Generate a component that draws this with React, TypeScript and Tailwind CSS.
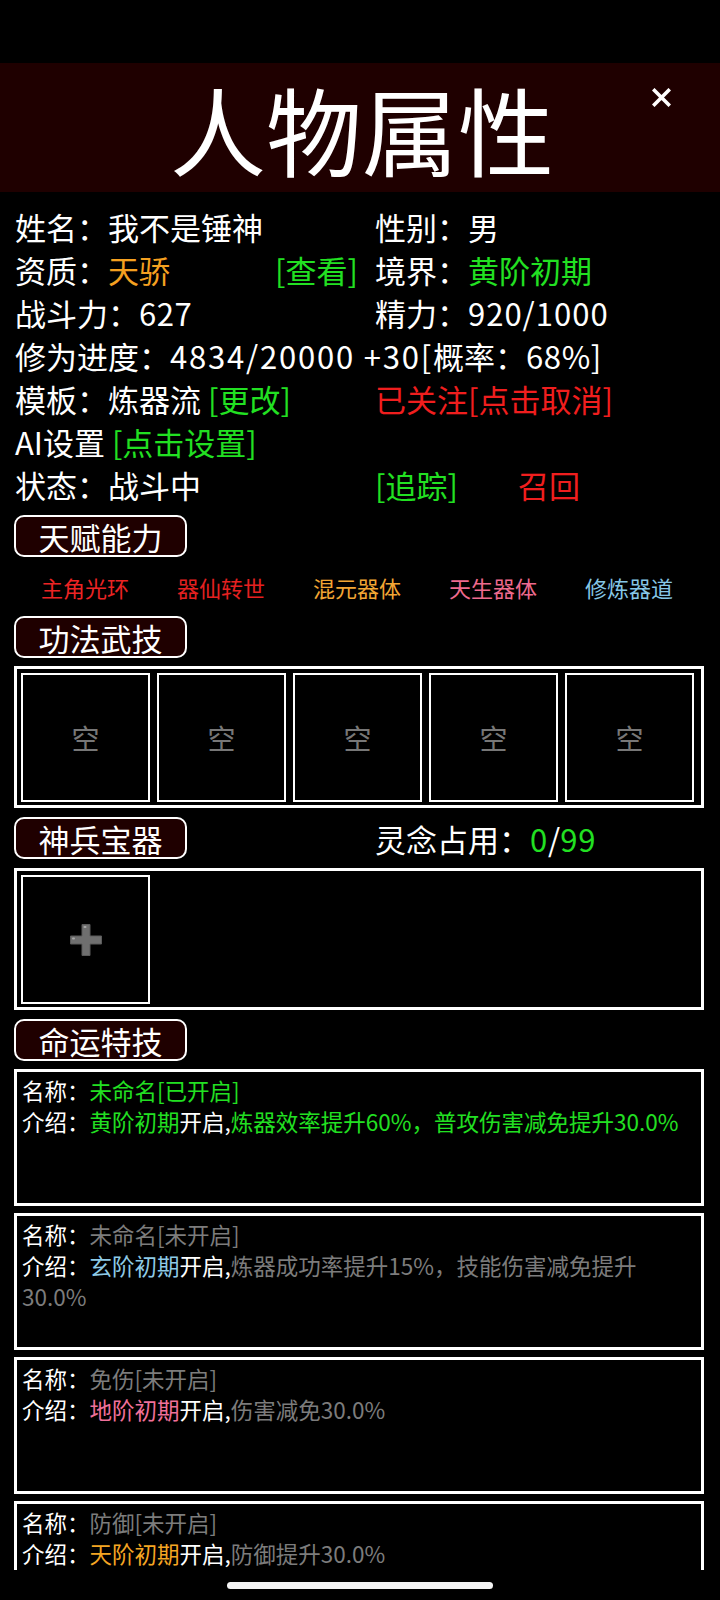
import React from "react";

type Seg = { text: string; color: string };

const GREEN = "text-[#22e022]";

const talents = [
  { name: "主角光环", color: "text-[#ec2424]" },
  { name: "器仙转世", color: "text-[#e42020]" },
  { name: "混元器体", color: "text-[#f2a634]" },
  { name: "天生器体", color: "text-[#ee6a8e]" },
  { name: "修炼器道", color: "text-[#86c6e6]" },
];

const fates: { name: string; on: boolean; stage: Seg; desc: string[]; descColor: string }[] = [
  {
    name: "未命名[已开启]",
    on: true,
    stage: { text: "黄阶初期", color: "text-[#22e022]" },
    desc: ["炼器效率提升60%，普攻伤害减免提升30.0%"],
    descColor: "text-[#22e022]",
  },
  {
    name: "未命名[未开启]",
    on: false,
    stage: { text: "玄阶初期", color: "text-[#8ecae6]" },
    desc: ["炼器成功率提升15%，技能伤害减免提升", "30.0%"],
    descColor: "text-[#7c7c7c]",
  },
  {
    name: "免伤[未开启]",
    on: false,
    stage: { text: "地阶初期", color: "text-[#f0709a]" },
    desc: ["伤害减免30.0%"],
    descColor: "text-[#7c7c7c]",
  },
  {
    name: "防御[未开启]",
    on: false,
    stage: { text: "天阶初期", color: "text-[#f5a623]" },
    desc: ["防御提升30.0%"],
    descColor: "text-[#7c7c7c]",
  },
];

function SectionTag({ title }: { title: string }) {
  return (
    <div className="flex h-[42px] w-[173px] shrink-0 items-center justify-center rounded-[10px] border-2 border-white bg-[#1f0000] text-[31px] leading-none text-white">
      {title}
    </div>
  );
}

function PlusIcon() {
  return (
    <svg width="34" height="34" viewBox="0 0 34 34">
      <path
        d="M13 1.5h8v11.5h11.5v8H21v11.5h-8V21H1.5v-8H13z"
        fill="#6f6f6f"
        stroke="#5a5a5a"
        strokeWidth="1"
        strokeLinejoin="round"
      />
      <rect x="14.5" y="3" width="3" height="2" rx="1" fill="#a8a8a8" />
      <rect x="3" y="14.5" width="3" height="2" rx="1" fill="#a8a8a8" />
    </svg>
  );
}

export default function App() {
  return (
    <div className="flex h-[1600px] w-[720px] flex-col overflow-hidden bg-black font-['Noto_Sans_CJK_SC',sans-serif] text-white">
      <div className="h-[63px] shrink-0" />

      {/* title band */}
      <div className="relative flex h-[129px] shrink-0 items-center justify-center bg-[#1f0000]">
        <span className="pl-[4px] text-[96px] leading-none text-white">人物属性</span>
        <button className="absolute right-[49px] top-[25px]">
          <svg width="19" height="19" viewBox="0 0 19 19">
            <path d="M2.5 2.5l14 14M16.5 2.5l-14 14" stroke="#fff" strokeWidth="3.6" strokeLinecap="square" />
          </svg>
        </button>
      </div>

      <div className="flex-1 overflow-hidden px-[14px]">
        {/* basic info */}
        <div className="pl-[1px] pt-[13px] text-[31px] leading-[43px]">
          <div className="flex">
            <div className="w-[360px] shrink-0">姓名：我不是锤神</div>
            <div>性别：男</div>
          </div>
          <div className="flex">
            <div className="flex w-[360px] shrink-0 pr-[17px]">
              <span>资质：</span>
              <span className="text-[#f5a020]">天骄</span>
              <span className={`ml-auto ${GREEN}`}>[查看]</span>
            </div>
            <div>
              境界：<span className={GREEN}>黄阶初期</span>
            </div>
          </div>
          <div className="flex">
            <div className="w-[360px] shrink-0">
              战斗力：<span className="tracking-[0.6px]">627</span>
            </div>
            <div>
              精力：<span className="tracking-[1px]">920/1000</span>
            </div>
          </div>
          <div className="whitespace-nowrap">
            修为进度：<span className="tracking-[1.8px]">4834/20000 +30[</span>概率：
            <span className="tracking-[0.6px]">68%]</span>
          </div>
          <div className="flex">
            <div className="w-[360px] shrink-0">
              模板：炼器流 <span className={GREEN}>[更改]</span>
            </div>
            <div className="text-[#f01e1e]">已关注[点击取消]</div>
          </div>
          <div>
            AI设置 <span className={GREEN}>[点击设置]</span>
          </div>
          <div className="flex">
            <div className="w-[360px] shrink-0">状态：战斗中</div>
            <div className={`w-[143px] shrink-0 ${GREEN}`}>[追踪]</div>
            <div className="text-[#f01e1e]">召回</div>
          </div>
        </div>

        {/* talents */}
        <div className="mt-[9px]">
          <SectionTag title="天赋能力" />
        </div>
        <div className="ml-[3px] grid h-[59px] w-[680px] grid-cols-5 items-center text-center text-[22px] leading-none">
          {talents.map((t) => (
            <span key={t.name} className={t.color}>
              {t.name}
            </span>
          ))}
        </div>

        {/* skills */}
        <SectionTag title="功法武技" />
        <div className="mt-[8px] flex w-[690px] gap-[7px] border-[3px] border-white pb-[3px] pl-[4px] pt-[4px]">
          {[0, 1, 2, 3, 4].map((i) => (
            <div
              key={i}
              className="flex h-[129px] w-[129px] items-center justify-center border-2 border-white text-[28px] text-[#777777]"
            >
              空
            </div>
          ))}
        </div>

        {/* treasures */}
        <div className="mt-[9px] flex items-center">
          <div className="w-[361px] shrink-0">
            <SectionTag title="神兵宝器" />
          </div>
          <div className="text-[31px] leading-none">
            灵念占用：<span className={`tracking-[0.8px] ${GREEN}`}>0</span>/
            <span className={`tracking-[0.8px] ${GREEN}`}>99</span>
          </div>
        </div>
        <div className="mt-[9px] flex w-[690px] border-[3px] border-white pb-[3px] pl-[4px] pt-[4px]">
          <div className="flex h-[129px] w-[129px] items-center justify-center border-2 border-white">
            <PlusIcon />
          </div>
        </div>

        {/* fate skills */}
        <div className="mt-[9px]">
          <SectionTag title="命运特技" />
        </div>
        <div className="mt-[8px] flex flex-col gap-[7px]">
          {fates.map((f) => (
            <div
              key={f.name}
              className="h-[137px] w-[690px] shrink-0 border-[3px] border-white pl-[5px] pr-[12px] pt-[3px] text-[22.5px] leading-[31px]"
            >
              <div>
                名称：<span className={f.on ? "text-[#22e022]" : "text-[#7c7c7c]"}>{f.name}</span>
              </div>
              <div>
                介绍：<span className={f.stage.color}>{f.stage.text}</span>
                <span>开启,</span>
                {f.desc.map((d) => (
                  <span key={d} className={f.descColor}>
                    {d}
                  </span>
                ))}
              </div>
            </div>
          ))}
        </div>
      </div>

      {/* home indicator */}
      <div className="flex h-[30px] shrink-0 justify-center pt-[12px]">
        <div className="h-[7px] w-[266px] rounded-full bg-[#f4f4f4]" />
      </div>
    </div>
  );
}
